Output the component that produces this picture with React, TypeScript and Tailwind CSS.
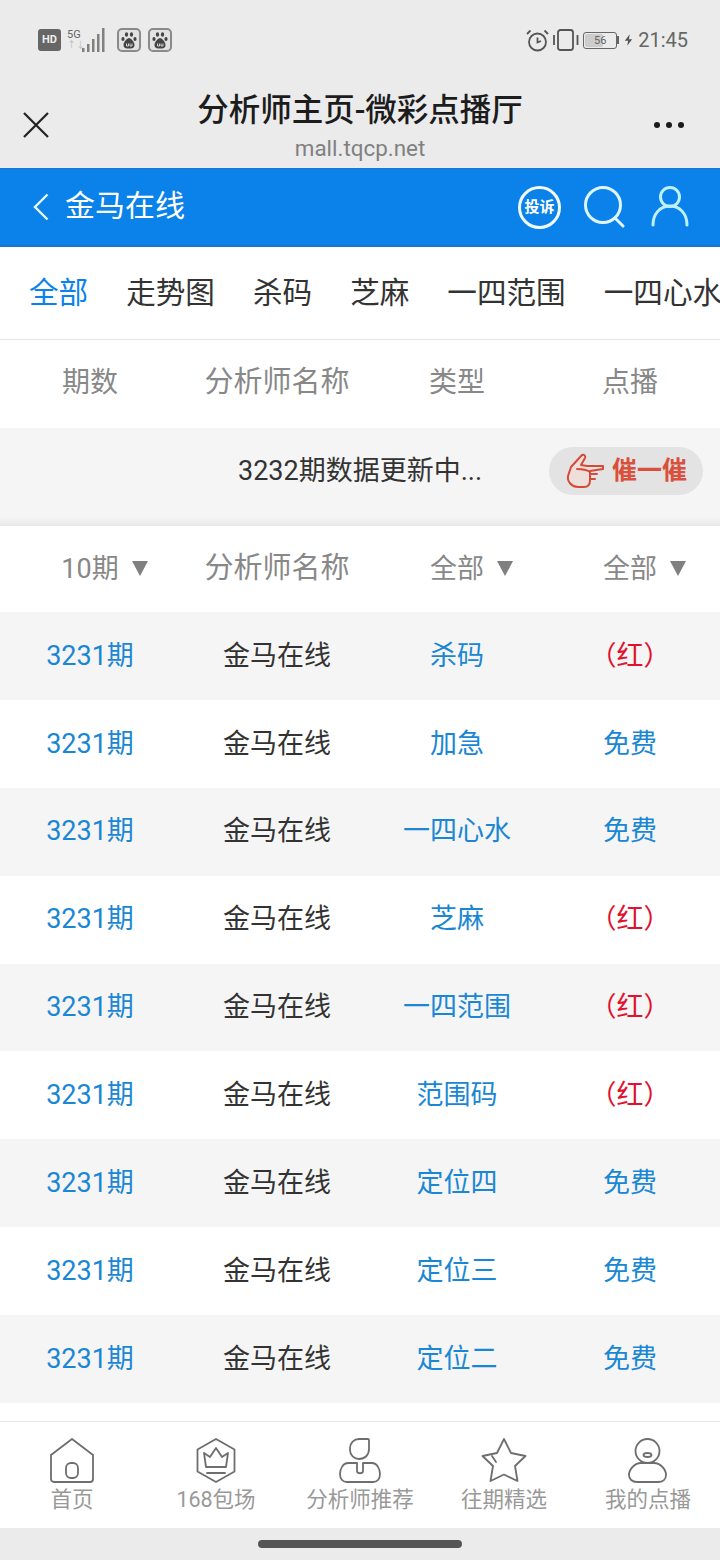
const FONT = "font-['Roboto','Noto_Sans_CJK_SC',sans-serif]";

type Row = { kind: string; price: string };

const rows: Row[] = [
  { kind: "杀码", price: "（红）" },
  { kind: "加急", price: "免费" },
  { kind: "一四心水", price: "免费" },
  { kind: "芝麻", price: "（红）" },
  { kind: "一四范围", price: "（红）" },
  { kind: "范围码", price: "（红）" },
  { kind: "定位四", price: "免费" },
  { kind: "定位三", price: "免费" },
  { kind: "定位二", price: "免费" },
];

const tabs = ["全部", "走势图", "杀码", "芝麻", "一四范围", "一四心水"];

function Cols({ a, b, c, d, className }: { a: React.ReactNode; b: React.ReactNode; c: React.ReactNode; d: React.ReactNode; className?: string }) {
  return (
    <div className={`grid grid-cols-[180px_194px_166px_180px] items-center text-center ${className ?? ""}`}>
      <div>{a}</div>
      <div>{b}</div>
      <div>{c}</div>
      <div>{d}</div>
    </div>
  );
}

function Caret({ label }: { label: string }) {
  return (
    <span className="relative inline-block text-[27px]">
      {label}
      <span className="absolute left-full top-[12px] ml-[13px] h-0 w-0 border-x-[8px] border-t-[15px] border-x-transparent border-t-[#808080]" />
    </span>
  );
}

function Paw({ className }: { className: string }) {
  return (
    <span className={`flex h-[24px] w-[24px] items-center justify-center rounded-[5px] border-2 border-[#8a8a8a] bg-[#e2e2e2] ${className}`}>
      <svg width="18" height="18" viewBox="0 0 18 18" fill="#444">
        <ellipse cx="3" cy="8" rx="1.600" ry="2" />
        <ellipse cx="6.500" cy="3.500" rx="1.600" ry="2.200" />
        <ellipse cx="11.500" cy="3.500" rx="1.600" ry="2.200" />
        <ellipse cx="15" cy="8" rx="1.600" ry="2" />
        <path d="M9 7C7 7 3.500 11 3.500 14S6 17.500 9 17.500 14.500 17 14.500 14 11 7 9 7z" />
        <path d="M6.500 12.500v2.500h2v-2.500M10 12.500V15h2v-2.500" fill="none" stroke="#e2e2e2" strokeWidth="0.900" />
      </svg>
    </span>
  );
}

function StatusBar() {
  return (
    <div className="flex h-[80px] items-center justify-between pl-[38px] pr-[32px] text-[#666]">
      <div className="flex items-center">
        <span className="flex h-[22px] w-[23px] items-center justify-center rounded-[3px] bg-[#666] text-[11px] font-bold text-[#eee]">HD</span>
        <span className="ml-[6px] flex w-[15px] flex-col text-[11px] leading-[11px]">
          <span>5G</span>
          <span className="text-[9px] text-[#bbb]">↑↓</span>
        </span>
        <svg width="24" height="24" viewBox="0 0 24 24" fill="#808080">
          <rect x="0" y="20" width="2.500" height="4" />
          <rect x="5" y="16" width="2.500" height="8" />
          <rect x="10" y="11" width="2.500" height="13" />
          <rect x="15" y="6" width="2.500" height="18" />
          <rect x="20" y="0" width="2.500" height="24" />
        </svg>
        <Paw className="ml-[11px]" />
        <Paw className="ml-[7px]" />
      </div>
      <div className="flex items-center">
        <svg width="23" height="23" viewBox="0 0 23 23" fill="none" stroke="#555" strokeWidth="1.800">
          <circle cx="11.500" cy="13" r="8.500" />
          <path d="M11.500 8.500v5l3.500-1.500M1 5l3.500-3.500M22 5l-3.500-3.500" />
        </svg>
        <svg width="26" height="22" viewBox="0 0 26 22" fill="none" stroke="#555" strokeWidth="1.800" className="ml-[4px]">
          <rect x="5" y="1" width="15" height="20" rx="2.500" />
          <path d="M1 6v10M24.500 6v10" />
        </svg>
        <span className="relative ml-[4px] flex h-[17px] w-[34px] items-center justify-center rounded-[3px] border border-[#666] text-[11px] leading-none">
          <span className="absolute inset-y-[1px] left-[1px] w-[18px] rounded-[2px] bg-[#ccc]" />
          <span className="relative">56</span>
        </span>
        <span className="h-[8px] w-[2px] bg-[#666]" />
        <svg width="9" height="14" viewBox="0 0 11 14" fill="#555" className="ml-[5px]">
          <path d="M7 0 1 8h4l-1 6 6-8H6z" />
        </svg>
        <span className="ml-[5px] text-[20px] leading-none">21:45</span>
      </div>
    </div>
  );
}

function BrowserBar() {
  return (
    <div className="relative h-[88px]">
      <svg width="26" height="26" viewBox="0 0 26 26" fill="none" stroke="#222" strokeWidth="2.200" className="absolute left-[23px] top-[32px]">
        <path d="M1 1l24 24M25 1 1 25" />
      </svg>
      <div className="flex flex-col items-center">
        <div className="mt-[11px] text-[31.500px] font-medium leading-[40px] text-[#1c1c1c]">分析师主页-微彩点播厅</div>
        <div className="mt-[4px] text-[22.400px] leading-[26px] text-[#808080]">mall.tqcp.net</div>
      </div>
      <div className="absolute left-[654px] top-[42px] flex gap-[6px]">
        <span className="h-[6px] w-[6px] rounded-full bg-[#1a1a1a]" />
        <span className="h-[6px] w-[6px] rounded-full bg-[#1a1a1a]" />
        <span className="h-[6px] w-[6px] rounded-full bg-[#1a1a1a]" />
      </div>
    </div>
  );
}

function HeaderBar() {
  return (
    <div className="flex h-[79px] items-center border-t border-b-2 border-t-[#1a78c8] border-b-[#1a78c8] bg-[#0a82ea] text-white">
      <svg width="16" height="28" viewBox="0 0 16 28" fill="none" stroke="#e8f8ff" strokeWidth="2.400" className="ml-[33px]">
        <path d="M14.500 1.500 2 14l12.500 12.500" />
      </svg>
      <span className="mb-[2px] ml-[16px] text-[30px] leading-none">金马在线</span>
      <span className="ml-auto flex h-[43px] w-[43px] items-center justify-center rounded-full border-[3px] border-[#f2fbff] text-[15px] font-bold leading-none">投诉</span>
      <svg width="41" height="42" viewBox="0 0 41 42" fill="none" stroke="#dff5ff" strokeWidth="3" strokeLinecap="round" className="ml-[23px]">
        <circle cx="19" cy="19" r="17.500" />
        <path d="M31 32l8 8" />
      </svg>
      <svg width="38" height="42" viewBox="0 0 38 42" fill="none" stroke="#bff0ff" strokeWidth="3" strokeLinecap="round" className="ml-[26px] mr-[31px]">
        <circle cx="19" cy="11" r="9.500" />
        <path d="M2 39c0-11 7-19 17-19s17 8 17 19" />
      </svg>
    </div>
  );
}

function Tabs() {
  return (
    <div className="flex h-[93px] items-center gap-[38px] overflow-hidden whitespace-nowrap border-b border-[#e6e6e6] pl-[29px] pt-[1px] text-[29.600px] text-[#333]">
      {tabs.map((tab, i) => (
        <span key={tab} className={i === 0 ? "text-[#0a82ea]" : ""}>{tab}</span>
      ))}
    </div>
  );
}

function Hand() {
  return (
    <svg width="40" height="36" viewBox="0 0 40 36" fill="#eedfdb" stroke="#d64a3a" strokeWidth="2" strokeLinejoin="round" strokeLinecap="round">
      <path d="M17 2 6 14l-3 9c-1 6 4 11 10 11h6c4 0 6-3 6-7v-9l13-2v-3H22l-6-1 4-7c1-2-1-4-3-3z" />
      <path d="M25 21h7M25 26h5M12 16c5 0 10 1 13 3" fill="none" />
    </svg>
  );
}

function NavItem({ label, children }: { label: string; children: React.ReactNode }) {
  return (
    <div className="flex flex-col items-center">
      <div className="flex h-[46px] items-end justify-center">{children}</div>
      <span className="mt-[3px] text-[21.500px] leading-[28px] text-[#999]">{label}</span>
    </div>
  );
}

function BottomNav() {
  const stroke = { fill: "none", stroke: "#6e6e6e", strokeWidth: 1.800, strokeLinejoin: "round" as const, strokeLinecap: "round" as const };
  return (
    <div className="grid h-[107px] grid-cols-5 border-t border-[#e6e6e6] bg-white pt-[15px]">
      <NavItem label="首页">
        <svg width="44" height="45" viewBox="0 0 44 45" {...stroke}>
          <path d="M1 17 22 1l21 16v24a3 3 0 0 1-3 3H4a3 3 0 0 1-3-3z" />
          <rect x="16" y="25" width="12" height="15" rx="5" />
        </svg>
      </NavItem>
      <NavItem label="168包场">
        <svg width="40" height="45" viewBox="0 0 40 45" {...stroke}>
          <path d="M20 1 38.500 11.500v22L20 44 1.500 33.500v-22z" />
          <path d="M8 15l6 4 6-9 6 9 6-4-2 14H10zM11 35h18" />
        </svg>
      </NavItem>
      <NavItem label="分析师推荐">
        <svg width="42" height="45" viewBox="0 0 42 45" {...stroke}>
          <path d="M29 1H20a9 9 0 0 0-9 9v2a9 9 0 0 0 9 9c6 0 10-4 10-10V2a1 1 0 0 0-1-1z" />
          <path d="M9 25c-5 0-8 6-8 11 0 5 3 8 7 8h26c4 0 7-3 7-8 0-5-3-11-8-11h-9v8c0 3-6 3-6 0v-8z" />
        </svg>
      </NavItem>
      <NavItem label="往期精选">
        <svg width="46" height="45" viewBox="0 0 46 45" {...stroke}>
          <path d="M23 1l7 14 14.500 3L34 28l2.500 15L23 36.500 9.500 43 12 28 1.500 18 16 15z" />
          <path d="M11 18l4 6" />
        </svg>
      </NavItem>
      <NavItem label="我的点播">
        <svg width="42" height="45" viewBox="0 0 42 45" {...stroke}>
          <circle cx="20.500" cy="13" r="12" />
          <ellipse cx="20.500" cy="17" rx="4" ry="2" />
          <path d="M10 44C5 44 2 41 2 37c0-6 6-12 12-12h13c6 0 12 6 12 12 0 4-3 7-8 7z" />
        </svg>
      </NavItem>
    </div>
  );
}

export default function App() {
  return (
    <div className={`flex h-[1560px] w-[720px] flex-col overflow-hidden bg-white ${FONT}`}>
      <div className="h-[168px] bg-[#ebebeb]">
        <StatusBar />
        <BrowserBar />
      </div>
      <HeaderBar />
      <Tabs />
      <Cols className="h-[88px] pb-[2px] text-[28px] text-[#888]" a="期数" b={<span className="text-[29px]">分析师名称</span>} c="类型" d="点播" />
      <div className="flex h-[89px] items-center bg-[#f5f5f5] pb-[4px]">
        <span className="ml-[238px] mt-[2px] text-[27px] text-[#333]">3232期数据更新中...</span>
        <span className="ml-auto mr-[17px] flex h-[48px] w-[154px] items-center rounded-full bg-[#e3e3e3] pl-[16px] text-[#d9503c]">
          <Hand />
          <span className="ml-[7px] text-[25px] font-bold">催一催</span>
        </span>
      </div>
      <div className="h-[9px] bg-gradient-to-b from-[#f5f5f5] to-[#e8e8e8]" />
      <Cols className="h-[86px] text-[#888]" a={<Caret label="10期" />} b={<span className="text-[29px]">分析师名称</span>} c={<Caret label="全部" />} d={<Caret label="全部" />} />
      {rows.map((row, i) => (
        <Cols
          key={row.kind}
          className={`h-[87.900px] text-[27px] ${i % 2 === 0 ? "bg-[#f5f5f5]" : "bg-white"}`}
          a={<span className="text-[#1a87d4]">3231期</span>}
          b={<span className="text-[#333]">金马在线</span>}
          c={<span className="text-[#1a87d4]">{row.kind}</span>}
          d={<span className={row.price === "免费" ? "text-[#1a87d4]" : "text-[#e0122e]"}>{row.price}</span>}
        />
      ))}
      <div className="flex-1" />
      <BottomNav />
      <div className="flex h-[32px] items-center justify-center bg-[#ebebeb]">
        <span className="h-[8px] w-[204px] rounded-full bg-[#555]" />
      </div>
    </div>
  );
}
